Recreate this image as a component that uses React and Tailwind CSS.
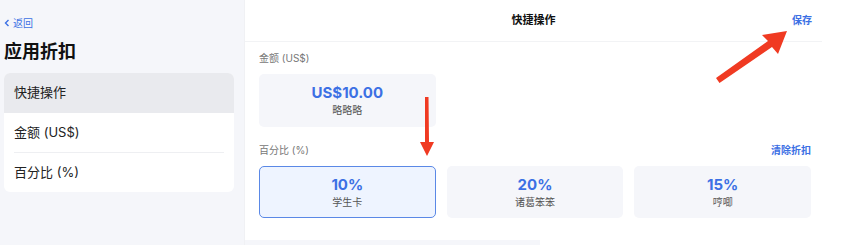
const font = { fontFamily: 'Inter, "Noto Sans CJK SC", sans-serif' };

const Option = ({ value, label, active }) => (
  <div
    className={
      'h-[52px] rounded-[5px] flex flex-col items-center justify-center ' +
      (active ? 'bg-[#eef4ff] border-[1.5px] border-[#5a88e6]' : 'bg-[#f5f6fa]')
    }
  >
    <div className="text-[15px] leading-[18px] font-bold text-[#3c70e4]">{value}</div>
    <div className="text-[10px] leading-[14px] text-[#555] mt-[1px]">{label}</div>
  </div>
);

const App = () => {
  return (
    <div className="relative w-[862px] h-[245px] flex bg-white overflow-hidden" style={font}>
      <div className="w-[244px] h-full bg-[#f5f6fa] px-1 pt-[16px]">
        <div className="flex items-center gap-[3px] text-[10px] leading-[14px] text-[#3c70e4]">
          <svg width="6" height="8" viewBox="0 0 6 8">
            <path d="M4.5 1 L1.5 4 L4.5 7" fill="none" stroke="#3c70e4" strokeWidth="1.4" />
          </svg>
          <span>返回</span>
        </div>
        <h1 className="mt-[9px] text-[18px] leading-[26px] font-bold text-[#111]">应用折扣</h1>
        <div className="mt-[8px] w-[230px] bg-white rounded-[6px] overflow-hidden">
          <div className="h-[40px] bg-[#e9eaee] flex items-center px-[10px] text-[13px] text-[#222]">
            快捷操作
          </div>
          <div className="h-[39px] flex items-center px-[10px] text-[13px] text-[#222]">金额 (US$)</div>
          <div className="mx-[10px] border-t border-[#eeeff2]" />
          <div className="h-[39px] flex items-center px-[10px] text-[13px] text-[#222]">百分比 (%)</div>
        </div>
      </div>

      <div className="w-[578px] flex flex-col border-l border-[#f0f1f4]">
        <div className="h-[42px] border-b border-[#f2f3f5] flex items-center relative">
          <div className="flex-1 text-center text-[11px] font-bold text-[#111]">快捷操作</div>
          <div className="absolute right-[10px] text-[10px] font-semibold text-[#3c70e4]">保存</div>
        </div>
        <div className="pl-[14px] pr-[11px]">
          <div className="mt-[9px] text-[10px] leading-[14px] text-[#777]">金额 (US$)</div>
          <div className="mt-[9px] grid grid-cols-3 gap-[11px]">
            <div className="h-[53px] rounded-[5px] bg-[#f5f6fa] flex flex-col items-center justify-center">
              <div className="text-[15px] leading-[18px] font-bold text-[#3c70e4]">US$10.00</div>
              <div className="text-[10px] leading-[14px] text-[#555] mt-[1px]">略略略</div>
            </div>
          </div>
          <div className="mt-[16px] flex justify-between text-[10px] leading-[14px]">
            <span className="text-[#777]">百分比 (%)</span>
            <span className="font-semibold text-[#3c70e4]">清除折扣</span>
          </div>
          <div className="mt-[9px] grid grid-cols-3 gap-[11px]">
            <Option value="10%" label="学生卡" active />
            <Option value="20%" label="诸葛笨笨" />
            <Option value="15%" label="哼唧" />
          </div>
        </div>
        <div className="mt-auto w-[295px] h-[5px] bg-[#f5f6fa]" />
      </div>

      <svg className="absolute inset-0 pointer-events-none" width="862" height="245">
        <path d="M716 78 L719.5 83 L772 47 L778 54 L787 31 L762 35 L768 41 Z" fill="#f03a22" strokeLinejoin="round" />
        <path d="M425 97 L428.5 97 L429 142 L434 142 L427 156 L420 142 L425 142 Z" fill="#f03a22" />
      </svg>
    </div>
  );
};

export default App;
